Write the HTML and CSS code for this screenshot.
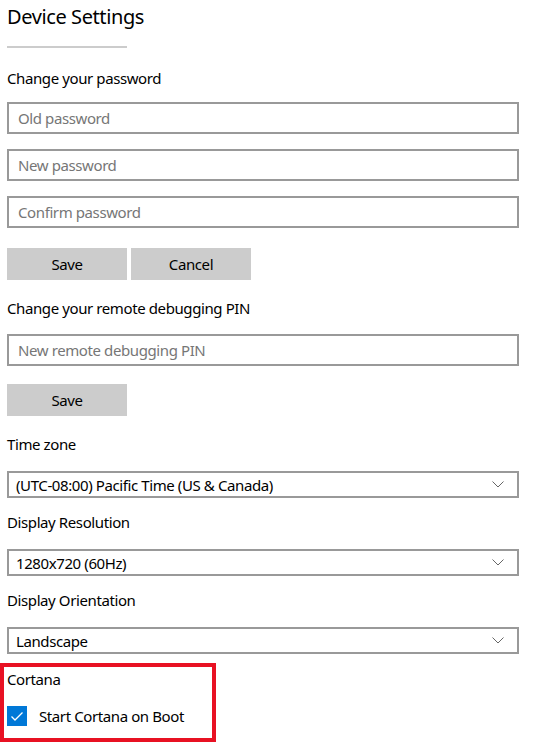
FILE: index.html
```html
<!DOCTYPE html>
<html>
<head>
<meta charset="utf-8">
<link rel="stylesheet" href="styles.css">
</head>
<body>
<div class="page">
  <h1 class="title">Device Settings</h1>
  <div class="divider"></div>

  <div class="label l-first">Change your password</div>
  <div class="field"><span class="ph">Old password</span></div>
  <div class="field"><span class="ph">New password</span></div>
  <div class="field"><span class="ph">Confirm password</span></div>
  <div class="buttons b-first">
    <div class="btn">Save</div>
    <div class="btn">Cancel</div>
  </div>

  <div class="label l-pin">Change your remote debugging PIN</div>
  <div class="field"><span class="ph">New remote debugging PIN</span></div>
  <div class="buttons b-pin">
    <div class="btn">Save</div>
  </div>

  <div class="label l-sel">Time zone</div>
  <div class="select"><span>(UTC-08:00) Pacific Time (US &amp; Canada)</span>
    <svg class="chev" width="12" height="7" viewBox="0 0 12 7"><path d="M0.5 0.5 L6 6 L11.5 0.5" fill="none" stroke="#666" stroke-width="1"/></svg>
  </div>

  <div class="label l-sel2">Display Resolution</div>
  <div class="select"><span>1280x720 (60Hz)</span>
    <svg class="chev" width="12" height="7" viewBox="0 0 12 7"><path d="M0.5 0.5 L6 6 L11.5 0.5" fill="none" stroke="#666" stroke-width="1"/></svg>
  </div>

  <div class="label l-sel2">Display Orientation</div>
  <div class="select"><span>Landscape</span>
    <svg class="chev" width="12" height="7" viewBox="0 0 12 7"><path d="M0.5 0.5 L6 6 L11.5 0.5" fill="none" stroke="#666" stroke-width="1"/></svg>
  </div>

  <div class="highlight">
    <div class="label l-cortana">Cortana</div>
    <div class="check-row">
      <div class="checkbox">
        <svg width="20" height="20" viewBox="0 0 20 20"><path d="M4.5 10.5 L8 14 L15.5 6.5" fill="none" stroke="#fff" stroke-width="1.3"/></svg>
      </div>
      <span class="check-text">Start Cortana on Boot</span>
    </div>
  </div>
</div>
</body>
</html>
```

FILE: styles.css
```css
html, body {
  margin: 0;
  padding: 0;
  background: #fff;
}
body {
  font-family: "Noto Sans", "Open Sans", sans-serif;
  color: #000;
  width: 539px;
  height: 744px;
  overflow: hidden;
}
.page {
  display: flex;
  flex-direction: column;
  align-items: stretch;
  padding: 3px 7px 0 7px;
  width: 512px;
}
.title {
  margin: 0;
  font-size: 20px;
  line-height: 28px;
  font-weight: 400;
  letter-spacing: -0.4px;
}
.divider {
  margin-top: 15px;
  width: 120px;
  height: 2px;
  background: #cccccc;
}
.label {
  font-size: 15px;
  line-height: 20px;
  letter-spacing: -0.4px;
  margin-bottom: 14px;
}
.l-first { margin-top: 20px; }
.l-pin { margin-top: 18px; margin-bottom: 16px; }
.l-sel { margin-top: 18px; margin-bottom: 17px; }
.l-sel2 { margin-top: 14px; margin-bottom: 17px; }
.field {
  box-sizing: border-box;
  height: 32px;
  border: 2px solid #999999;
  margin-bottom: 15px;
  display: flex;
  align-items: center;
  padding-left: 9px;
}
.ph {
  font-size: 15px;
  color: #767676;
  letter-spacing: -0.4px;
}
.buttons {
  display: flex;
  gap: 4px;
}
.b-first { margin-top: 5px; }
.b-pin { margin-top: 3px; }
.btn {
  width: 120px;
  height: 32px;
  background: #cccccc;
  display: flex;
  align-items: center;
  justify-content: center;
  font-size: 15px;
  letter-spacing: -0.4px;
}
.select {
  box-sizing: border-box;
  height: 27px;
  border: 2px solid #999999;
  display: flex;
  align-items: center;
  justify-content: space-between;
  padding: 0 13px 0 7px;
  font-size: 15px;
  letter-spacing: -0.4px;
}
.chev { display: block; }
.highlight {
  box-sizing: border-box;
  margin-top: 9px;
  margin-left: -7px;
  width: 216px;
  height: 79px;
  border: 4px solid #e81123;
  padding: 2px 0 0 3px;
}
.l-cortana { margin-bottom: 17px; }
.check-row {
  display: flex;
  align-items: center;
  height: 20px;
}
.checkbox {
  width: 20px;
  height: 20px;
  background: #0078d7;
}
.checkbox svg { display: block; }
.check-text {
  margin-left: 12px;
  font-size: 15px;
  letter-spacing: -0.4px;
}
```
